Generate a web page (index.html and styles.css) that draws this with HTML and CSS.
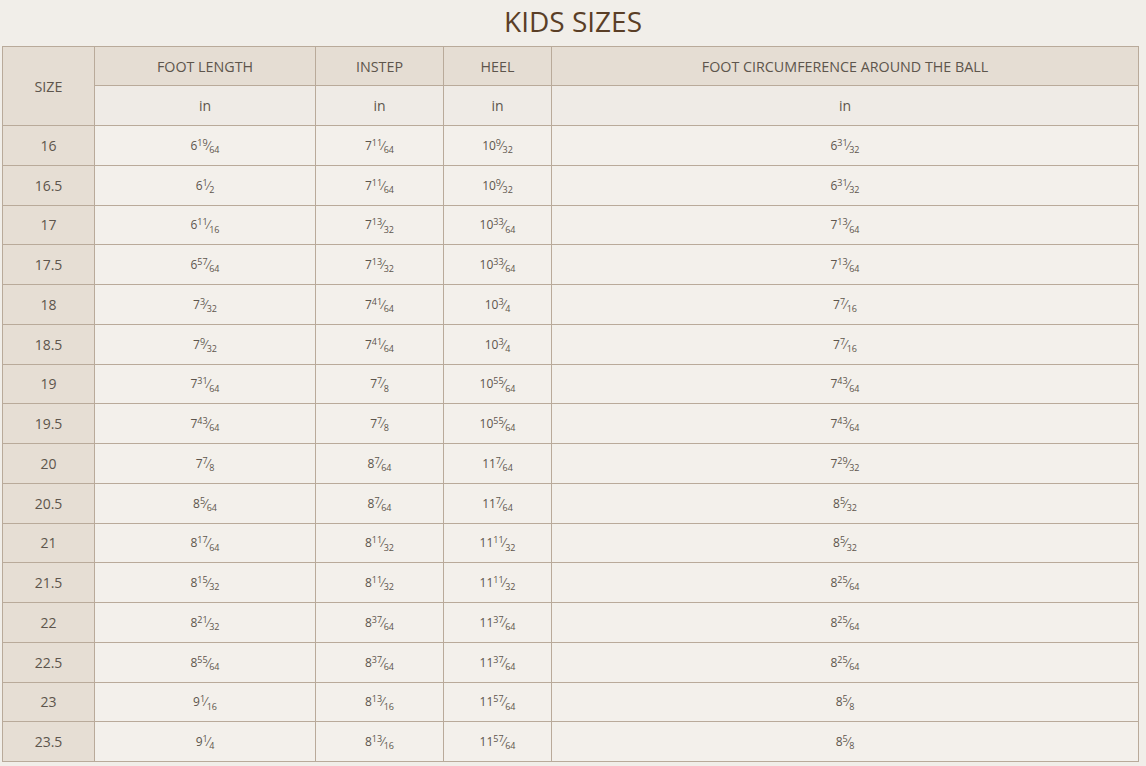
FILE: index.html
```html
<!DOCTYPE html>
<html>
<head>
<meta charset="utf-8">
<link rel="stylesheet" href="styles.css">
</head>
<body>
<h1 class="title">KIDS SIZES</h1>
<table class="sizes">
  <colgroup>
    <col class="c-size"><col class="c-len"><col class="c-inst"><col class="c-heel"><col class="c-circ">
  </colgroup>
  <thead>
    <tr class="head">
      <th rowspan="2" class="size-h">SIZE</th>
      <th>FOOT LENGTH</th>
      <th>INSTEP</th>
      <th>HEEL</th>
      <th>FOOT CIRCUMFERENCE AROUND THE BALL</th>
    </tr>
    <tr class="unit">
      <td>in</td><td>in</td><td>in</td><td>in</td>
    </tr>
  </thead>
  <tbody>
    <tr><th>16</th><td>6<sup>19</sup>⁄<sub>64</sub></td><td>7<sup>11</sup>⁄<sub>64</sub></td><td>10<sup>9</sup>⁄<sub>32</sub></td><td>6<sup>31</sup>⁄<sub>32</sub></td></tr>
    <tr><th>16.5</th><td>6<sup>1</sup>⁄<sub>2</sub></td><td>7<sup>11</sup>⁄<sub>64</sub></td><td>10<sup>9</sup>⁄<sub>32</sub></td><td>6<sup>31</sup>⁄<sub>32</sub></td></tr>
    <tr><th>17</th><td>6<sup>11</sup>⁄<sub>16</sub></td><td>7<sup>13</sup>⁄<sub>32</sub></td><td>10<sup>33</sup>⁄<sub>64</sub></td><td>7<sup>13</sup>⁄<sub>64</sub></td></tr>
    <tr><th>17.5</th><td>6<sup>57</sup>⁄<sub>64</sub></td><td>7<sup>13</sup>⁄<sub>32</sub></td><td>10<sup>33</sup>⁄<sub>64</sub></td><td>7<sup>13</sup>⁄<sub>64</sub></td></tr>
    <tr><th>18</th><td>7<sup>3</sup>⁄<sub>32</sub></td><td>7<sup>41</sup>⁄<sub>64</sub></td><td>10<sup>3</sup>⁄<sub>4</sub></td><td>7<sup>7</sup>⁄<sub>16</sub></td></tr>
    <tr><th>18.5</th><td>7<sup>9</sup>⁄<sub>32</sub></td><td>7<sup>41</sup>⁄<sub>64</sub></td><td>10<sup>3</sup>⁄<sub>4</sub></td><td>7<sup>7</sup>⁄<sub>16</sub></td></tr>
    <tr><th>19</th><td>7<sup>31</sup>⁄<sub>64</sub></td><td>7<sup>7</sup>⁄<sub>8</sub></td><td>10<sup>55</sup>⁄<sub>64</sub></td><td>7<sup>43</sup>⁄<sub>64</sub></td></tr>
    <tr><th>19.5</th><td>7<sup>43</sup>⁄<sub>64</sub></td><td>7<sup>7</sup>⁄<sub>8</sub></td><td>10<sup>55</sup>⁄<sub>64</sub></td><td>7<sup>43</sup>⁄<sub>64</sub></td></tr>
    <tr><th>20</th><td>7<sup>7</sup>⁄<sub>8</sub></td><td>8<sup>7</sup>⁄<sub>64</sub></td><td>11<sup>7</sup>⁄<sub>64</sub></td><td>7<sup>29</sup>⁄<sub>32</sub></td></tr>
    <tr><th>20.5</th><td>8<sup>5</sup>⁄<sub>64</sub></td><td>8<sup>7</sup>⁄<sub>64</sub></td><td>11<sup>7</sup>⁄<sub>64</sub></td><td>8<sup>5</sup>⁄<sub>32</sub></td></tr>
    <tr><th>21</th><td>8<sup>17</sup>⁄<sub>64</sub></td><td>8<sup>11</sup>⁄<sub>32</sub></td><td>11<sup>11</sup>⁄<sub>32</sub></td><td>8<sup>5</sup>⁄<sub>32</sub></td></tr>
    <tr><th>21.5</th><td>8<sup>15</sup>⁄<sub>32</sub></td><td>8<sup>11</sup>⁄<sub>32</sub></td><td>11<sup>11</sup>⁄<sub>32</sub></td><td>8<sup>25</sup>⁄<sub>64</sub></td></tr>
    <tr><th>22</th><td>8<sup>21</sup>⁄<sub>32</sub></td><td>8<sup>37</sup>⁄<sub>64</sub></td><td>11<sup>37</sup>⁄<sub>64</sub></td><td>8<sup>25</sup>⁄<sub>64</sub></td></tr>
    <tr><th>22.5</th><td>8<sup>55</sup>⁄<sub>64</sub></td><td>8<sup>37</sup>⁄<sub>64</sub></td><td>11<sup>37</sup>⁄<sub>64</sub></td><td>8<sup>25</sup>⁄<sub>64</sub></td></tr>
    <tr><th>23</th><td>9<sup>1</sup>⁄<sub>16</sub></td><td>8<sup>13</sup>⁄<sub>16</sub></td><td>11<sup>57</sup>⁄<sub>64</sub></td><td>8<sup>5</sup>⁄<sub>8</sub></td></tr>
    <tr><th>23.5</th><td>9<sup>1</sup>⁄<sub>4</sub></td><td>8<sup>13</sup>⁄<sub>16</sub></td><td>11<sup>57</sup>⁄<sub>64</sub></td><td>8<sup>5</sup>⁄<sub>8</sub></td></tr>
  </tbody>
</table>
</body>
</html>
```
FILE: styles.css
```css
html, body {
  margin: 0;
  padding: 0;
}
body {
  background: #f1eee9;
  font-family: "Open Sans", "Liberation Sans", sans-serif;
  color: #5c544b;
  width: 1146px;
  height: 766px;
  overflow: hidden;
}
.title {
  margin: 0;
  height: 46px;
  line-height: 42px;
  font-size: 28px;
  font-weight: 400;
  color: #5a3e26;
  text-align: center;
}
.sizes {
  margin-left: 2px;
  width: 1137px;
  border-collapse: collapse;
  table-layout: fixed;
  border: 1px solid #b9aa9a;
}
.c-size { width: 92px; }
.c-len { width: 221px; }
.c-inst { width: 128px; }
.c-heel { width: 108px; }
.c-circ { width: auto; }
.sizes th, .sizes td {
  border: 1px solid #b9aa9a;
  text-align: center;
  vertical-align: middle;
  padding: 0;
}
.head th {
  background: #e5ddd3;
  font-size: 14.3px;
  font-weight: 400;
  color: #5d554c;
  height: 38px;
}
.unit td {
  background: #efebe6;
  font-size: 14px;
  color: #5d554c;
  height: 39px;
}
tbody th, tbody td {
  height: 38.75px;
}
tbody th {
  background: #e6ded4;
  font-size: 14px;
  font-weight: 400;
  color: #5d554c;
}
tbody td {
  background: #f3f0eb;
  font-size: 12px;
  color: #5d554c;
}
sup, sub {
  font-size: 9px;
  line-height: 0;
  position: relative;
  vertical-align: baseline;
}
sup { top: -0.45em; }
sub { top: 0.35em; }
```
